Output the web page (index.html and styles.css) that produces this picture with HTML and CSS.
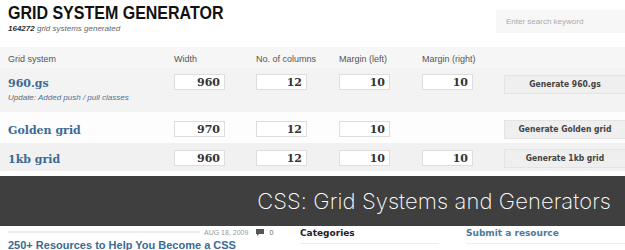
FILE: index.html
```html
<!DOCTYPE html>
<html lang="en">
<head>
  <meta charset="UTF-8" />
  <title>Grid System Generator</title>
  <link rel="stylesheet" href="styles.css">
</head>
<body>
  <div class="top">
    <div class="brand">
      <h1>GRID SYSTEM GENERATOR</h1>
      <div class="count"><b>164272</b> grid systems generated</div>
    </div>
    <div class="search">Enter search keyword</div>
  </div>

  <div class="grid-table">
    <div class="row head">
      <div>Grid system</div>
      <div>Width</div>
      <div>No. of columns</div>
      <div>Margin (left)</div>
      <div>Margin (right)</div>
      <div></div>
    </div>
    <div class="row first">
      <div class="name">
        <a>960.gs</a>
        <div class="update">Update: <span>Added push / pull classes</span></div>
      </div>
      <div><div class="num">960</div></div>
      <div><div class="num">12</div></div>
      <div><div class="num">10</div></div>
      <div><div class="num">10</div></div>
      <div><div class="btn">Generate 960.gs</div></div>
    </div>
    <div class="row light">
      <div class="name"><a>Golden grid</a></div>
      <div><div class="num">970</div></div>
      <div><div class="num">12</div></div>
      <div><div class="num">10</div></div>
      <div></div>
      <div><div class="btn">Generate Golden grid</div></div>
    </div>
    <div class="row last">
      <div class="name"><a>1kb grid</a></div>
      <div><div class="num">960</div></div>
      <div><div class="num">12</div></div>
      <div><div class="num">10</div></div>
      <div><div class="num">10</div></div>
      <div><div class="btn">Generate 1kb grid</div></div>
    </div>
  </div>

  <div class="banner">CSS: Grid Systems and Generators</div>

  <div class="lower">
    <div class="post">
      <div class="meta">
        <span class="rule"></span>
        <span class="date">AUG 18, 2009</span>
        <svg class="bubble" width="8" height="7" viewBox="0 0 8 7"><path d="M0 0h8v5H3L1 7V5H0z" fill="#555"/></svg>
        <span class="cnt">0</span>
      </div>
      <a class="post-title">250+ Resources to Help You Become a CSS</a>
    </div>
    <div class="side">
      <div class="side-head">Categories</div>
    </div>
    <div class="side wide">
      <div class="side-head blue">Submit a resource</div>
    </div>
  </div>
</body>
</html>
```

FILE: styles.css
```css
body {
  margin: 0;
  width: 625px;
  height: 250px;
  overflow: hidden;
  background: #fff;
  font-family: 'Liberation Sans', Arial, sans-serif;
  color: #333;
}
.top {
  display: flex;
  justify-content: space-between;
  padding-left: 8px;
  height: 47px;
}
h1 {
  margin: 2px 0 0;
  font-size: 16px;
  line-height: 19px;
  color: #111;
  transform: scaleY(1.12);
  transform-origin: left top;
}
.count {
  margin-top: 3px;
  font-size: 8px;
  font-style: italic;
  color: #666;
}
.count b {
  color: #333;
}
.search {
  margin-top: 10px;
  width: 119px;
  height: 23px;
  padding-left: 10px;
  line-height: 23px;
  background: #f7f7f7;
  font-size: 8px;
  color: #aaa;
}
.row {
  display: grid;
  grid-template-columns: 166px 82px 83px 83px 82px 121px;
  padding-left: 8px;
  align-items: center;
}
.head {
  height: 21px;
  background: #f6f6f6;
  font-size: 9px;
  color: #555;
  padding-top: 3px;
  box-sizing: border-box;
}
.first {
  height: 44px;
  background: #f3f3f3;
  align-items: start;
  padding-top: 6px;
  box-sizing: border-box;
}
.light {
  height: 31px;
  background: #fdfdfd;
  padding-top: 3px;
  box-sizing: border-box;
}
.last {
  height: 28px;
  background: #f1f1f1;
  padding-top: 2px;
  box-sizing: border-box;
}
.name a {
  font-family: 'DejaVu Serif', Georgia, serif;
  font-weight: bold;
  font-size: 11px;
  color: #3c6a93;
}
.first .name a {
  display: block;
  margin-top: 3px;
}
.update {
  margin-top: 3px;
  font-size: 8px;
  font-style: italic;
  color: #666;
}
.update span {
  color: #4a7199;
}
.num {
  width: 51px;
  height: 16px;
  box-sizing: border-box;
  background: #fff;
  border: 1px solid #ddd;
  padding-right: 4px;
  text-align: right;
  font-family: 'DejaVu Serif', Georgia, serif;
  font-weight: bold;
  font-size: 11px;
  line-height: 15px;
  color: #333;
}
.btn {
  height: 17px;
  margin-top: 1px;
  background: #efefef;
  border: 1px solid #e4e4e4;
  border-right: none;
  text-align: center;
  font-family: 'DejaVu Sans Condensed', 'DejaVu Sans', sans-serif;
  font-weight: bold;
  font-size: 8.5px;
  line-height: 16px;
  color: #444;
}
.banner {
  margin-top: 5px;
  height: 50px;
  background: #3f3f3f;
  color: #fff;
  font-family: 'Inter', 'Liberation Sans', sans-serif;
  font-weight: 200;
  font-size: 22px;
  line-height: 50px;
  text-align: right;
  padding-right: 14px;
  letter-spacing: 0.1px;
}
.lower {
  display: flex;
  padding-left: 8px;
}
.post {
  width: 292px;
}
.meta {
  display: flex;
  align-items: center;
  height: 12px;
  font-size: 7px;
  color: #999;
}
.rule {
  width: 192px;
  height: 2px;
  background: #eee;
  margin-right: 4px;
}
.bubble {
  margin-left: 8px;
}
.cnt {
  margin-left: 5px;
  color: #666;
}
.post-title {
  display: block;
  margin-top: 0;
  font-size: 11px;
  line-height: 14px;
  font-weight: bold;
  color: #3b6a94;
}
.side {
  width: 139px;
  margin-right: 27px;
  padding-top: 2px;
  border-bottom: 1px solid #eee;
  height: 15px;
}
.side.wide {
  width: 159px;
  margin-right: 0;
}
.side-head {
  font-family: 'DejaVu Sans', Verdana, sans-serif;
  font-weight: bold;
  font-size: 9px;
  color: #222;
}
.side-head.blue {
  color: #4a7aa3;
}
```
